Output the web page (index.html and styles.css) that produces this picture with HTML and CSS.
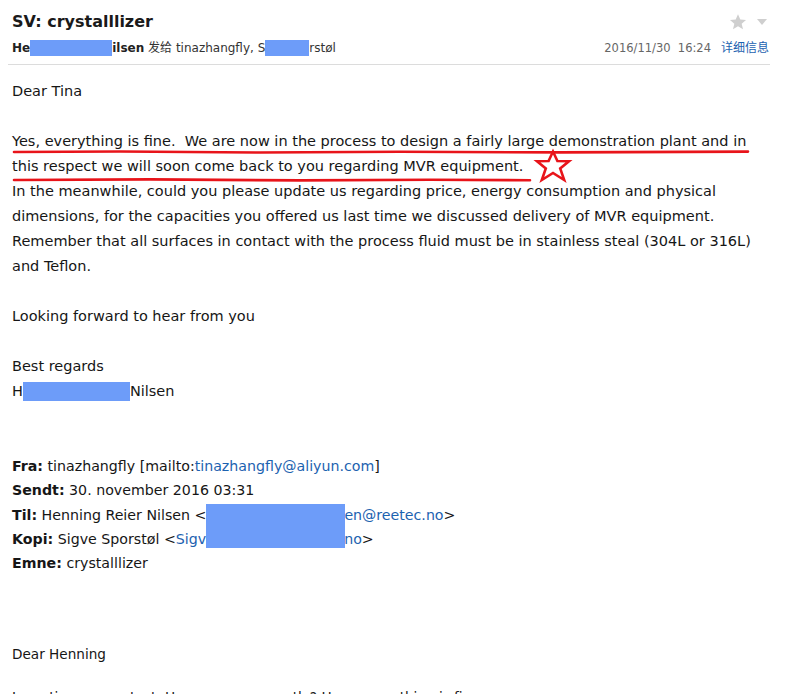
FILE: index.html
```html
<!DOCTYPE html>
<html>
<head>
<meta charset="utf-8">
<link rel="stylesheet" href="styles.css">
</head>
<body>
<div class="mail">
  <header class="head">
    <div class="row">
      <h1 class="subject">SV: crystalllizer</h1>
      <div class="tools">
        <svg class="star" width="18" height="18" viewBox="0 0 24 24"><path d="M12 1.5l3.1 7.1 7.6.6-5.8 5 1.8 7.5L12 17.7l-6.7 4 1.8-7.5-5.8-5 7.6-.6z" fill="#cfcfcf"/></svg>
        <svg class="caret" width="10" height="8" viewBox="0 0 10 8"><path d="M0 1h10L5 7z" fill="#cfcfcf"/></svg>
      </div>
    </div>
    <div class="row meta">
      <div class="from"><b>He<span class="redact r1"></span>ilsen</b> 发给 tinazhangfly, S<span class="redact r2"></span>rstøl</div>
      <div class="when"><span class="date">2016/11/30&nbsp;&nbsp;16:24</span><a class="link details">详细信息</a></div>
    </div>
  </header>

  <div class="body">
    <p class="gap">Dear Tina</p>
    <p>Yes, everything is fine.&nbsp; We are now in the process to design a fairly large demonstration plant and in this respect we will soon come back to you regarding MVR equipment.</p>
    <p class="gap">In the meanwhile, could you please update us regarding price, energy consumption and physical dimensions, for the capacities you offered us last time we discussed delivery of MVR equipment. Remember that all surfaces in contact with the process fluid must be in stainless steal (304L or 316L) and Teflon.</p>
    <p class="gap">Looking forward to hear from you</p>
    <p class="sig">Best regards<br>H<span class="redact r3"></span>Nilsen</p>

    <div class="quoted">
      <div><b>Fra:</b> tinazhangfly [mailto:<a class="link">tinazhangfly@aliyun.com</a>]</div>
      <div><b>Sendt:</b> 30. november 2016 03:31</div>
      <div><b>Til:</b> Henning Reier Nilsen &lt;<span class="hole"></span><a class="link">en@reetec.no</a>&gt;</div>
      <div><b>Kopi:</b> Sigve Sporstøl &lt;<a class="link">Sigv<span class="hole"></span>no</a>&gt;</div>
      <div><b>Emne:</b> crystalllizer</div>
    </div>

    <div class="reply">
      <p class="gap2">Dear Henning</p>
      <p>Long time no contact. How are you recently? Hope everything is fine.</p>
    </div>
  </div>

  <div class="redact big"></div>
  <svg class="marks" width="785" height="200" viewBox="0 0 785 200">
    <path d="M14 152 L120 151.5 L260 152.5 L400 151.8 L560 152.4 L748 151.6" fill="none" stroke="#e8141a" stroke-width="2.6" stroke-linecap="round"/>
    <path d="M14 180 L150 179.4 L300 180.4 L430 179.8 L530 180.2" fill="none" stroke="#e8141a" stroke-width="2.6" stroke-linecap="round"/>
    <path d="M553 151.5 L557.4 161 L569 161.3 L560.2 168.4 L564.2 180 L553 173 L541.8 180 L545.8 168.4 L537 161.3 L548.6 161 Z" fill="none" stroke="#e8141a" stroke-width="2.6" stroke-linejoin="miter"/>
  </svg>
</div>
</body>
</html>
```

FILE: styles.css
```css
html, body {
  margin: 0;
  padding: 0;
  background: #ffffff;
}
body {
  width: 785px;
  height: 694px;
  overflow: hidden;
  font-family: "DejaVu Sans", "Noto Sans CJK SC", sans-serif;
  color: #161616;
}
.mail {
  position: relative;
}
.head {
  margin: 0 15px 0 8px;
  padding: 0 1px 0 4px;
  border-bottom: 1px solid #dcdcdc;
  height: 65px;
  box-sizing: border-box;
}
.row {
  display: flex;
  justify-content: space-between;
  align-items: center;
}
.subject {
  margin: 0;
  padding-top: 11px;
  font-size: 16px;
  line-height: 22px;
  font-weight: bold;
  color: #1a1a1a;
}
.tools {
  display: flex;
  align-items: center;
  gap: 10px;
  padding-top: 10px;
  padding-right: 2px;
}
.meta {
  margin-top: 5px;
  font-size: 12px;
  line-height: 20px;
}
.from {
  color: #333;
}
.from b {
  color: #222;
}
.when {
  display: flex;
  align-items: baseline;
  gap: 10px;
}
.date {
  color: #666;
  font-size: 11.5px;
}
.link {
  color: #1c62b0;
}
.redact {
  background: #6d9cf9;
}
.from .redact {
  display: inline-block;
  height: 16px;
  vertical-align: -4px;
}
.r1 { width: 82px; }
.r2 { width: 44px; }
.r3 {
  display: inline-block;
  width: 107px;
  height: 19px;
  vertical-align: -5px;
}
.body {
  padding: 2px 23px 0 12px;
  font-size: 14.5px;
  line-height: 25px;
}
.body p {
  margin: 0;
}
.body .gap {
  margin-top: 12px;
  margin-bottom: 25px;
}
.body p + .gap {
  margin-top: 0;
}
.body .sig {
  margin-bottom: 50px;
}
.quoted {
  font-size: 14.2px;
  line-height: 24.3px;
}
.hole {
  display: inline-block;
  width: 138px;
}
.reply {
  font-size: 13.6px;
}
.body .gap2 {
  margin-top: 67px;
  margin-bottom: 18px;
}
.big {
  position: absolute;
  left: 206px;
  top: 504px;
  width: 139px;
  height: 44px;
}
.marks {
  position: absolute;
  left: 0;
  top: 0;
  pointer-events: none;
}
```
